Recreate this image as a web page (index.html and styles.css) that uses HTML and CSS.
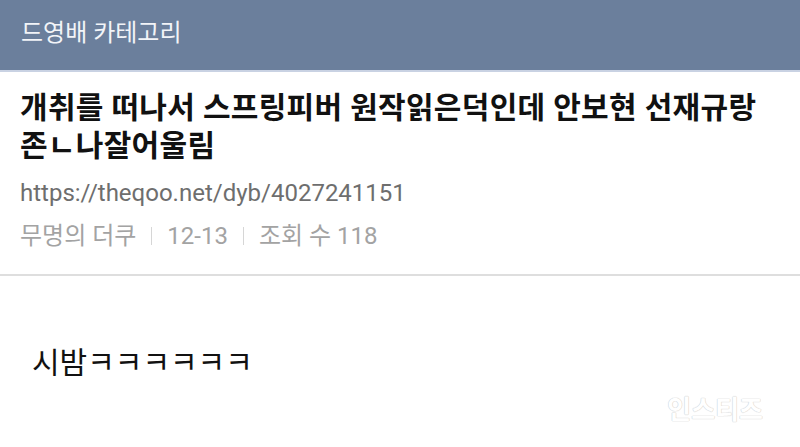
FILE: index.html
```html
<!DOCTYPE html>
<html lang="ko">
<head>
    <meta charset="UTF-8">
    <meta name="viewport" content="width=device-width, initial-scale=1.0">
    <title>드영배 카테고리</title>
    <link rel="stylesheet" href="styles.css">
</head>
<body>
    <header class="top-bar">
        <h1>드영배 카테고리</h1>
    </header>

    <section class="post-head">
        <h2 class="post-title">개취를 떠나서 스프링피버 원작읽은덕인데 안보현 선재규랑 존ㄴ나잘어울림</h2>
        <div class="post-url">https://theqoo.net/dyb/4027241151</div>
        <div class="post-meta">
            <span>무명의 더쿠</span>
            <span class="sep"></span>
            <span>12-13</span>
            <span class="sep"></span>
            <span>조회 수 118</span>
        </div>
    </section>

    <section class="post-body">
        <p>시밤ㅋㅋㅋㅋㅋㅋ</p>
    </section>

    <div class="watermark">인스티즈</div>
</body>
</html>
```

FILE: styles.css
```css
body {
    font-family: Roboto, "Noto Sans CJK KR", sans-serif;
    margin: 0;
    background-color: #fff;
    width: 800px;
    height: 447px;
    overflow: hidden;
    position: relative;
}
.top-bar {
    background-color: #6b7f9c;
    border-bottom: 2px solid #c9d2e3;
    display: flex;
    align-items: center;
    padding: 0 0 5px 21px;
    box-sizing: border-box;
    height: 72px;
}
.top-bar h1 {
    margin: 0;
    font-size: 24px;
    font-weight: normal;
    color: #f2f4f8;
    line-height: 30px;
}
.post-head {
    padding: 17px 20px 0 20px;
    border-bottom: 2px solid #dedede;
    height: 204px;
    box-sizing: border-box;
}
.post-title {
    margin: 0;
    font-size: 30px;
    font-weight: bold;
    line-height: 38px;
    letter-spacing: 0.3px;
    color: #111;
}
.post-url {
    margin-top: 14px;
    font-size: 24px;
    color: #6e6e6e;
    line-height: 28px;
}
.post-meta {
    margin-top: 15px;
    font-size: 24px;
    color: #a3a3a3;
    line-height: 28px;
    display: flex;
    align-items: center;
    gap: 15px;
}
.post-meta .sep {
    width: 1px;
    height: 18px;
    background-color: #d6d6d6;
}
.post-body {
    padding: 69px 32px 0 32px;
}
.post-body p {
    margin: 0;
    font-size: 30px;
    line-height: 36px;
    color: #111;
}
.watermark {
    position: absolute;
    right: 37px;
    bottom: 21px;
    font-size: 26px;
    line-height: 32px;
    font-weight: bold;
    color: #fff;
    text-shadow: 0 0 1px #d4d4d4, 0 0 1px #d4d4d4, 0 0 1px #d4d4d4;
}
```
